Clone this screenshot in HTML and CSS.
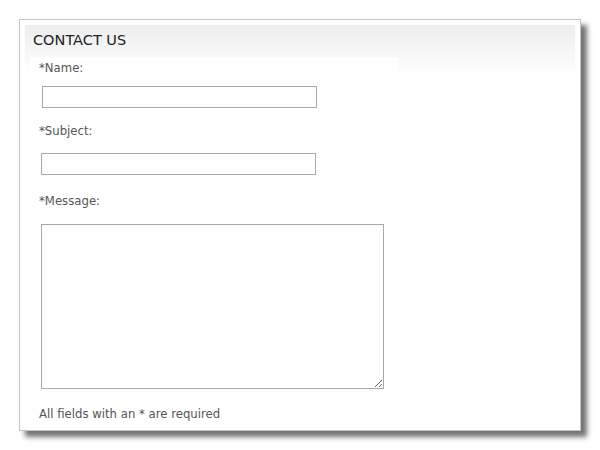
FILE: index.html
```html
<!DOCTYPE html>
<html lang="en">
<head>
    <meta charset="UTF-8">
    <meta name="viewport" content="width=device-width, initial-scale=1.0">
    <title>Contact Us</title>
    <link rel="stylesheet" href="styles.css">
</head>
<body>
    <div class="panel">
        <div class="panel-inner">
            <div class="title">CONTACT US</div>
            <form class="contact-form">
                <label class="field-label label-name" for="name">*Name:</label>
                <input type="text" id="name" class="text-input input-name">

                <label class="field-label label-subject" for="subject">*Subject:</label>
                <input type="text" id="subject" class="text-input input-subject">

                <label class="field-label label-message" for="message">*Message:</label>
                <textarea id="message" class="message-input"></textarea>

                <div class="note">All fields with an * are required</div>
            </form>
        </div>
    </div>
</body>
</html>
```

FILE: styles.css
```css
body {
    margin: 0;
    padding-bottom: 20px;
    background-color: #fff;
    font-family: "DejaVu Sans", sans-serif;
}

.panel {
    box-sizing: border-box;
    width: 562px;
    margin: 19px 0 0 19px;
    padding: 5px 5px 6px 5px;
    border: 1px solid #c4c4c4;
    background-color: #fff;
    box-shadow: 6px 6px 5px rgba(0, 0, 0, 0.55);
}

.panel-inner {
    background: linear-gradient(#ecedee, #fff) no-repeat;
    background-size: 100% 50px;
}

.title {
    height: 32px;
    padding-left: 8px;
    font-size: 14.5px;
    line-height: 30px;
    color: #222;
}

.contact-form {
    display: flex;
    flex-direction: column;
    align-items: flex-start;
    width: 368px;
    margin-left: 5px;
    padding: 1px 0 0 9px;
    box-sizing: border-box;
    background-color: #fff;
}

.field-label {
    font-size: 11.7px;
    line-height: 20px;
    color: #555;
}

.text-input,
.message-input {
    box-sizing: border-box;
    margin: 0 0 0 2px;
    border: 1px solid #a8a8a8;
    background: #fff;
    font-family: inherit;
}

.text-input {
    width: 275px;
    height: 22px;
}

.input-name {
    margin-top: 8px;
    margin-left: 3px;
}

.label-subject {
    margin-top: 13px;
}

.input-subject {
    margin-top: 12px;
}

.label-message {
    margin-top: 16px;
}

.message-input {
    width: 343px;
    height: 165px;
    margin-top: 13px;
}

.note {
    margin-top: 15px;
    font-size: 11.7px;
    line-height: 20px;
    color: #555;
}
```
